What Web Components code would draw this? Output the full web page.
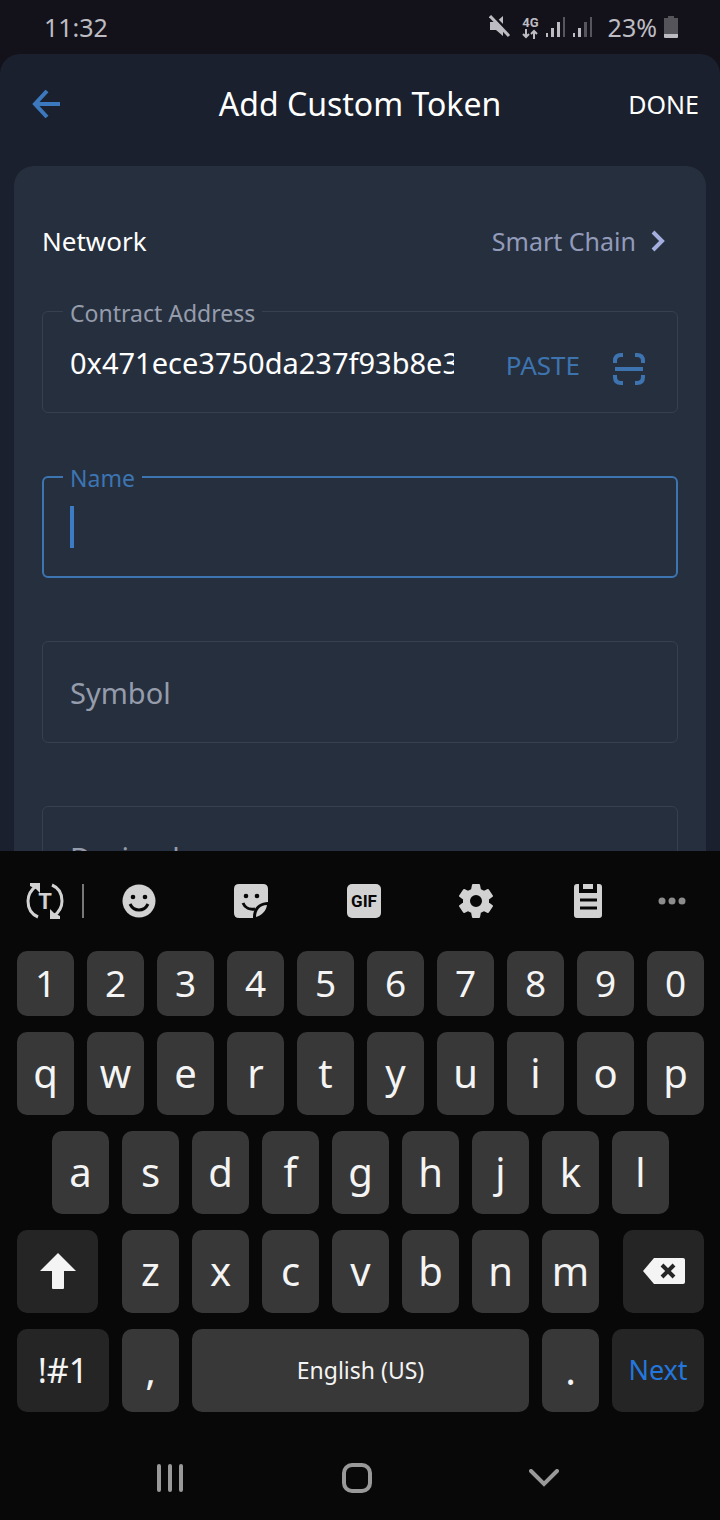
<!DOCTYPE html>
<html lang="en">
<head>
  <meta charset="UTF-8">
  <meta name="viewport" content="width=device-width, initial-scale=1">
  <title>Add Custom Token</title>
  <style>
    body {
      margin: 0;
      height: 100vh;
      display: flex;
      flex-direction: column;
      overflow: hidden;
      background: #13121a;
      color: #fff;
      font-family: "Noto Sans", "Open Sans", sans-serif;
    }
    token-screen {
      flex: 1;
      min-height: 0;
    }
  </style>
</head>
<body>
  <status-bar></status-bar>
  <token-screen>
    <app-header slot="header">Add Custom Token</app-header>
    <network-row label="Network">Smart Chain</network-row>
    <outlined-field label="Contract Address" value="0x471ece3750da237f93b8e3">
      <paste-actions></paste-actions>
    </outlined-field>
    <outlined-field label="Name" active></outlined-field>
    <outlined-field label="Symbol"></outlined-field>
    <outlined-field label="Decimals"></outlined-field>
  </token-screen>
  <soft-keyboard></soft-keyboard>
  <nav-bar></nav-bar>

  <script>
    const icons = {
      mute: [22, 24, `<path fill="currentColor" d="M1 7h6l7-6v20l-7-6H1z"/><path d="M3 0l20 20" stroke="#13121a" stroke-width="3"/><path d="M1 1l19 20" stroke="currentColor" stroke-width="3"/>`],
      data: [16, 10, `<path d="M4 0v8M1 5l3 3 3-3M12 10V2M9 5l3-3 3 3" fill="none" stroke="currentColor" stroke-width="2"/>`],
      signal3: [20, 20, `<g fill="currentColor"><path d="M0 16h2v4H0zM5 11h3v9H5zM11 5h3v15h-3z"/><path opacity=".4" d="M17 0h2v20h-2z"/></g>`],
      signal2: [20, 20, `<g fill="currentColor"><path d="M0 16h2v4H0zM5 11h3v9H5z"/><path opacity=".4" d="M11 5h3v15h-3zM17 0h2v20h-2z"/></g>`],
      battery: [14, 22, `<path fill="#55545a" d="M4 0h6v2h4v16H0V2h4z"/><path fill="currentColor" d="M0 18h14v3q0 1-1 1H1q-1 0-1-1z"/>`],
      back: [28, 28, `<path d="M15 1L3 14l12 13M3 14h25" fill="none" stroke="currentColor" stroke-width="4"/>`],
      chevron: [14, 22, `<path d="M2 2l9 9-9 9" fill="none" stroke="currentColor" stroke-width="4"/>`],
      scan: [34, 34, `<path d="M3 11V9q0-6 6-6h2M23 3h2q6 0 6 6v2M31 23v2q0 6-6 6h-2M11 31H9q-6 0-6-6v-2M3 17h28" fill="none" stroke="currentColor" stroke-width="4"/>`],
      translate: [38, 38, `<g fill="none" stroke="currentColor" stroke-width="3"><path d="M12 35C5 32 2 26 2 19 2 13 5 8 10 4M26 3c7 3 10 9 10 16 0 6-3 11-8 15"/></g><path fill="currentColor" d="M4 1h10v10l-4-4-6-3zM34 37H24V27l4 4 6 3z"/><text x="19" y="27" text-anchor="middle" font-family="Roboto, sans-serif" font-size="22" font-weight="700" fill="currentColor">T</text>`],
      smile: [34, 34, `<circle cx="17" cy="17" r="16.500" fill="currentColor"/><circle cx="11" cy="13" r="2.300" fill="#080808"/><circle cx="23" cy="13" r="2.300" fill="#080808"/><path d="M8 20c4 8 14 8 18 0" fill="none" stroke="#080808" stroke-width="3"/>`],
      sticker: [34, 34, `<path fill="currentColor" d="M5 0h24q5 0 5 5v13c-9 0-15 6-15 15v1H5q-5 0-5-5V5q0-5 5-5z"/><path fill="currentColor" d="M33 21c-1 6-5 10-11 12 0-7 4-12 11-12z"/><circle cx="12" cy="12" r="2.300" fill="#080808"/><circle cx="23" cy="12" r="2.300" fill="#080808"/><path d="M9 19c2 5 7 7 12 6" fill="none" stroke="#080808" stroke-width="3"/>`],
      gif: [34, 34, `<rect width="34" height="34" rx="5" fill="currentColor"/><text x="17" y="23" text-anchor="middle" font-family="Roboto, sans-serif" font-size="17" font-weight="700" fill="#080808">GIF</text>`],
      gear: [34, 34, `<path fill="currentColor" stroke="currentColor" stroke-width="2" stroke-linejoin="round" fill-rule="evenodd" d="M14 1h6l1 5 4 2 4-2 4 6-4 3v4l4 3-4 6-4-2-4 2-1 5h-6l-1-5-4-2-4 2-4-6 4-3v-4l-4-3 4-6 4 2 4-2zM17 10a7 7 0 1 0 0 14 7 7 0 0 0 0-14z"/>`],
      clipboard: [28, 34, `<path fill="currentColor" d="M3 0h2v9h18V0h2q3 0 3 3v28q0 3-3 3H3q-3 0-3-3V3q0-3 3-3zM9 0h10v5H9z"/><path d="M6 16h17M6 24h17" stroke="#080808" stroke-width="3"/>`],
      more: [28, 8, `<g fill="currentColor"><circle cx="4" cy="4" r="3.500"/><circle cx="14" cy="4" r="3.500"/><circle cx="24" cy="4" r="3.500"/></g>`],
      shift: [36, 36, `<path fill="currentColor" d="M18 0l18 18H24v17q0 1-1 1H13q-1 0-1-1V18H0z"/>`],
      backspace: [42, 26, `<path fill="currentColor" d="M11 0h29q2 0 2 2v22q0 2-2 2H11L0 13z"/><path d="M19 7l12 12M31 7L19 19" stroke="#252525" stroke-width="4"/>`],
      recents: [28, 28, `<path d="M3 2v24M14 2v24M25 2v24" stroke="currentColor" stroke-width="4" stroke-linecap="round"/>`],
      home: [32, 32, `<rect x="3" y="3" width="26" height="26" rx="8" fill="none" stroke="currentColor" stroke-width="4"/>`],
      down: [30, 18, `<path d="M2 2l13 13L28 2" fill="none" stroke="currentColor" stroke-width="4" stroke-linecap="round"/>`]
    };

    // Shared reset for the buttons inside each shadow root
    const buttonReset = `
      button {
        display: flex;
        align-items: center;
        justify-content: center;
        margin: 0;
        padding: 0;
        border: 0;
        background: none;
        color: inherit;
        font: inherit;
        cursor: pointer;
      }
    `;

    class UiIcon extends HTMLElement {
      connectedCallback() {
        const [w, h, body] = icons[this.getAttribute('name')];
        this.attachShadow({ mode: 'open' }).innerHTML = `
          <style>
            :host { display: block; flex: none; }
            svg { display: block; }
          </style>
          <svg width="${w}" height="${h}" viewBox="0 0 ${w} ${h}" aria-hidden="true">${body}</svg>
        `;
      }
    }

    class StatusBar extends HTMLElement {
      connectedCallback() {
        this.attachShadow({ mode: 'open' }).innerHTML = `
          <style>
            :host {
              display: flex;
              justify-content: space-between;
              align-items: center;
              height: 54px;
              padding: 0 42px 0 44px;
              color: #bdbcc2;
              font-size: 25px;
              line-height: 36px;
            }
            .right { display: flex; align-items: center; gap: 7px; }
            .network {
              display: flex;
              flex-direction: column;
              align-items: center;
              margin-left: 4px;
              font: 700 13px/13px Roboto, sans-serif;
            }
            .percent { margin: 0 0 0 8px; }
          </style>
          <span>11:32</span>
          <div class="right">
            <ui-icon name="mute"></ui-icon>
            <span class="network">4G<ui-icon name="data"></ui-icon></span>
            <ui-icon name="signal3"></ui-icon>
            <ui-icon name="signal2"></ui-icon>
            <span class="percent">23%</span>
            <ui-icon name="battery"></ui-icon>
          </div>
        `;
      }
    }

    class TokenScreen extends HTMLElement {
      connectedCallback() {
        this.attachShadow({ mode: 'open' }).innerHTML = `
          <style>
            :host {
              display: block;
              overflow: hidden;
              background: #1a202e;
              border-radius: 20px 20px 0 0;
            }
            main {
              display: flex;
              flex-direction: column;
              gap: 63px;
              margin: 12px 14px 0;
              padding: 35px 28px;
              border-radius: 20px;
              background: #262f3e;
            }
          </style>
          <slot name="header"></slot>
          <main><slot></slot></main>
        `;
      }
    }

    class AppHeader extends HTMLElement {
      connectedCallback() {
        this.attachShadow({ mode: 'open' }).innerHTML = `
          <style>
            ${buttonReset}
            :host {
              display: grid;
              grid-template-columns: 1fr auto 1fr;
              align-items: center;
              height: 100px;
              padding: 0 21px;
            }
            h1 { margin: 0; font-size: 32px; line-height: 46px; font-weight: 400; }
            .back { justify-self: start; padding-left: 11px; color: #3b78bd; }
            .done { justify-self: end; font-size: 25px; line-height: 36px; }
          </style>
          <button class="back" aria-label="Back"><ui-icon name="back"></ui-icon></button>
          <h1><slot></slot></h1>
          <button class="done">DONE</button>
        `;
      }
    }

    class NetworkRow extends HTMLElement {
      connectedCallback() {
        this.attachShadow({ mode: 'open' }).innerHTML = `
          <style>
            ${buttonReset}
            :host {
              display: flex;
              justify-content: space-between;
              align-items: center;
              height: 80px;
              margin-bottom: -33px;
              padding-right: 13px;
              font-size: 26px;
              line-height: 36px;
            }
            button { gap: 15px; color: #929bba; font-size: 25px; }
            ui-icon { color: #a3aede; }
          </style>
          <span id="label">${this.getAttribute('label')}</span>
          <button aria-describedby="label"><slot></slot><ui-icon name="chevron"></ui-icon></button>
        `;
      }
    }

    class OutlinedField extends HTMLElement {
      connectedCallback() {
        const label = this.getAttribute('label');
        const value = this.getAttribute('value') || '';
        const active = this.hasAttribute('active');
        const floating = active || value;
        this.attachShadow({ mode: 'open' }).innerHTML = `
          <style>
            :host {
              display: flex;
              align-items: center;
              position: relative;
              box-sizing: border-box;
              height: 102px;
              padding: 0 27px;
              border: 1px solid #36404f;
              border-radius: 6px;
            }
            :host([active]) {
              padding: 0 26px;
              border: 2px solid #3c75b2;
              --label: #3c75b2;
              --label-left: 19px;
              --label-top: -14px;
            }
            label {
              position: absolute;
              left: var(--label-left, 20px);
              top: var(--label-top, -13px);
              padding: 0 7px;
              background: #262f3e;
              color: var(--label, #959cab);
              font-size: 23px;
              line-height: 28px;
            }
            input {
              flex: 1;
              min-width: 0;
              height: 44px;
              padding: 0;
              border: 0;
              outline: 0;
              background: none;
              color: #fff;
              font: inherit;
              font-size: 29px;
            }
            input::placeholder { color: #959cab; opacity: 1; }
            .caret { width: 4px; height: 42px; background: #3c7cc4; }
          </style>
          ${floating ? `<label for="input">${label}</label>` : ''}
          ${active ? '<span class="caret"></span>' : ''}
          <input id="input" type="text" value="${value}"
            ${floating ? '' : `placeholder="${label}" aria-label="${label}"`}>
          <slot></slot>
        `;
      }
    }

    class PasteActions extends HTMLElement {
      connectedCallback() {
        this.attachShadow({ mode: 'open' }).innerHTML = `
          <style>
            ${buttonReset}
            :host {
              display: flex;
              align-items: center;
              gap: 32px;
              padding: 5px 4px 0 52px;
              color: #3d74b0;
              font-size: 26px;
              line-height: 36px;
            }
            .scan { padding-top: 8px; }
          </style>
          <button>PASTE</button>
          <button class="scan" aria-label="Scan QR code"><ui-icon name="scan"></ui-icon></button>
        `;
      }
    }

    class KeyboardKey extends HTMLElement {
      connectedCallback() {
        this.attachShadow({ mode: 'open' }).innerHTML = `
          <style>
            ${buttonReset}
            :host {
              display: flex;
              flex: 57 1 0;
              min-width: 0;
              font-size: 40px;
              line-height: 56px;
            }
            :host([kind="digit"]) { font-size: 37px; }
            :host([kind="shift"]) { flex-grow: 81; margin-right: 11px; }
            :host([kind="delete"]) { flex-grow: 81; margin-left: 11px; }
            :host([kind="symbols"]) { flex-grow: 92; font-size: 34px; }
            :host([kind="next"]) { flex-grow: 92; font-size: 27px; color: #2377dc; }
            :host([kind="space"]) { flex-grow: 337; font-size: 23px; }
            button {
              flex: 1;
              min-width: 0;
              box-sizing: border-box;
              padding-bottom: 2px;
              border-radius: 10px;
              background: #383838;
            }
            :host(:is([kind="shift"], [kind="delete"], [kind="symbols"], [kind="next"])) button {
              background: #252525;
            }
          </style>
          <button><slot></slot></button>
        `;
      }
    }

    class KeyboardTools extends HTMLElement {
      connectedCallback() {
        const tools = ['smile', 'sticker', 'gif', 'gear', 'clipboard'];
        this.attachShadow({ mode: 'open' }).innerHTML = `
          <style>
            ${buttonReset}
            :host {
              display: flex;
              align-items: center;
              height: 100px;
              padding: 0 20px 0 7px;
              color: #d2d2d2;
            }
            button { flex: 112 1 0; }
            .translate { flex-grow: 76; }
            .more { flex-grow: 56; color: #8c8c8c; }
            hr { width: 2px; height: 34px; margin: 0 -1px; border: 0; background: #777; }
          </style>
          <button class="translate" aria-label="Translate"><ui-icon name="translate"></ui-icon></button>
          <hr>
          ${tools.map(t => `<button aria-label="${t}"><ui-icon name="${t}"></ui-icon></button>`).join('')}
          <button class="more" aria-label="More"><ui-icon name="more"></ui-icon></button>
        `;
      }
    }

    class SoftKeyboard extends HTMLElement {
      connectedCallback() {
        const keys = (chars, kind = 'letter') => [...chars]
          .map(c => `<keyboard-key kind="${kind}">${c}</keyboard-key>`).join('');
        this.attachShadow({ mode: 'open' }).innerHTML = `
          <style>
            :host { display: block; background: #080808; color: #f4f4f4; }
            .rows {
              display: flex;
              flex-direction: column;
              gap: 16px;
              padding: 0 16px 24px 17px;
            }
            .row { display: flex; gap: 13px; height: 83px; }
            .digits { height: 65px; }
            .inset { padding: 0 35px; }
          </style>
          <keyboard-tools></keyboard-tools>
          <div class="rows">
            <div class="row digits">${keys('1234567890', 'digit')}</div>
            <div class="row">${keys('qwertyuiop')}</div>
            <div class="row inset">${keys('asdfghjkl')}</div>
            <div class="row">
              <keyboard-key kind="shift"><ui-icon name="shift"></ui-icon></keyboard-key>
              ${keys('zxcvbnm')}
              <keyboard-key kind="delete"><ui-icon name="backspace"></ui-icon></keyboard-key>
            </div>
            <div class="row">
              <keyboard-key kind="symbols">!#1</keyboard-key>
              ${keys(',')}
              <keyboard-key kind="space">English (US)</keyboard-key>
              ${keys('.')}
              <keyboard-key kind="next">Next</keyboard-key>
            </div>
          </div>
        `;
      }
    }

    class NavBar extends HTMLElement {
      connectedCallback() {
        this.attachShadow({ mode: 'open' }).innerHTML = `
          <style>
            ${buttonReset}
            :host {
              display: flex;
              height: 84px;
              padding: 0 82px 0 76px;
              background: #080808;
              color: #999;
            }
            button { flex: 1; }
          </style>
          <button aria-label="Recent apps"><ui-icon name="recents"></ui-icon></button>
          <button aria-label="Home"><ui-icon name="home"></ui-icon></button>
          <button aria-label="Hide keyboard"><ui-icon name="down"></ui-icon></button>
        `;
      }
    }

    customElements.define('ui-icon', UiIcon);
    customElements.define('status-bar', StatusBar);
    customElements.define('token-screen', TokenScreen);
    customElements.define('app-header', AppHeader);
    customElements.define('network-row', NetworkRow);
    customElements.define('outlined-field', OutlinedField);
    customElements.define('paste-actions', PasteActions);
    customElements.define('keyboard-key', KeyboardKey);
    customElements.define('keyboard-tools', KeyboardTools);
    customElements.define('soft-keyboard', SoftKeyboard);
    customElements.define('nav-bar', NavBar);
  </script>
</body>
</html>
